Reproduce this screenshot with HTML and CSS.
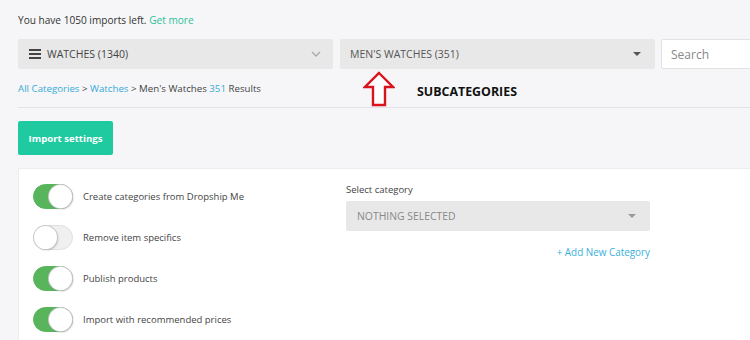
FILE: index.html
```html
<!DOCTYPE html>
<html>
<head>
<meta charset="utf-8">
<link rel="stylesheet" href="styles.css">
</head>
<body>
<div class="page">
  <div class="notice">You have 1050 imports left. <a class="teal">Get more</a></div>
  <div class="filters">
    <div class="dd dd-main">
      <svg class="burger" width="12" height="10" viewBox="0 0 12 10"><rect x="0" y="0" width="12" height="2" fill="#444"/><rect x="0" y="4" width="12" height="2" fill="#444"/><rect x="0" y="8" width="12" height="2" fill="#444"/></svg>
      <span class="dd-text">WATCHES (1340)</span>
      <svg class="chev" width="10" height="6" viewBox="0 0 10 6"><path d="M1 1 L5 5 L9 1" fill="none" stroke="#aaa" stroke-width="1.3"/></svg>
    </div>
    <div class="dd dd-sub">
      <span class="dd-text">MEN'S WATCHES (351)</span>
      <span class="caret"></span>
    </div>
    <div class="search">Search</div>
  </div>
  <div class="crumbrow">
    <div class="crumbs"><a class="blue">All Categories</a> &gt; <a class="blue">Watches</a> &gt; Men's Watches <span class="blue">351</span> Results</div>
    <svg class="arrow" width="32" height="36" viewBox="0 0 32 36"><path d="M16 2 L30 16 L22 16 L22 34 L10 34 L10 16 L2 16 Z" fill="#fff" stroke="#d9141c" stroke-width="2.4" stroke-linejoin="miter"/></svg>
    <div class="annot">SUBCATEGORIES</div>
  </div>
  <div class="divider"></div>
  <button class="btn">Import settings</button>
  <div class="card">
    <div class="col-left">
      <div class="row"><span class="toggle on"></span><span>Create categories from Dropship Me</span></div>
      <div class="row"><span class="toggle"></span><span>Remove item specifics</span></div>
      <div class="row"><span class="toggle on"></span><span>Publish products</span></div>
      <div class="row"><span class="toggle on"></span><span>Import with recommended prices</span></div>
    </div>
    <div class="col-right">
      <div class="label">Select category</div>
      <div class="select"><span>NOTHING SELECTED</span><span class="caret light"></span></div>
      <div class="addlink">+ Add New Category</div>
    </div>
  </div>
</div>
</body>
</html>
```
FILE: styles.css
```css
* { box-sizing: border-box; }
html, body { margin: 0; padding: 0; }
body {
  background: #f6f6f8;
  font-family: "Open Sans", "Noto Sans", sans-serif;
  font-size: 10.5px;
  color: #333;
  overflow: hidden;
  width: 750px;
  height: 340px;
}
.page { padding: 12px 0 0 18px; width: 800px; }
.notice { line-height: 16px; color: #333; font-size: 10.1px; }
.teal { color: #2ebf98; }
.blue { color: #38aad6; }
.filters { display: flex; margin-top: 11px; height: 30px; }
.dd {
  width: 315px; height: 30px; background: #e8e8e8;
  display: flex; align-items: center; padding: 0 10px; border-radius: 2px;
  color: #555; font-size: 10.5px;
}
.dd-main { padding-left: 11px; margin-right: 7px; }
.dd-main .dd-text { margin-left: 6px; flex: 1; color: #444; }
.dd-sub { margin-right: 6px; }
.dd-sub .dd-text { flex: 1; color: #555; }
.chev { margin-right: 2px; }
.caret {
  width: 0; height: 0; border-left: 4px solid transparent; border-right: 4px solid transparent;
  border-top: 4px solid #555; margin-right: 4px;
}
.caret.light { border-top-color: #999; }
.search {
  width: 120px; height: 30px; background: #fff; border: 1px solid #e2e2e2; border-radius: 2px;
  display: flex; align-items: center; padding-left: 9px; color: #888; font-size: 12px;
}
.crumbs { color: #444; font-size: 9.7px; }
.crumbrow { position: relative; height: 38px; display: flex; align-items: center; }
.arrow { position: absolute; left: 345px; top: 2px; }
.annot { position: absolute; left: 399px; top: 14px; font-weight: 700; font-size: 12.4px; color: #111; }
.divider { height: 1px; background: #e3e3e5; width: 750px; }
.btn {
  display: block; margin-top: 13px; width: 95px; height: 34px; background: #1fcaa0; color: #fff;
  border: 0; border-radius: 2px; font-family: inherit; font-weight: 700; font-size: 9.6px; padding: 0;
}
.card {
  margin-top: 13px; background: #fff; height: 200px; width: 760px;
  display: flex; padding: 15px 14px 0 14px; border: 1px solid #ededee;
  font-size: 9.5px;
}
.col-left { width: 313px; display: flex; flex-direction: column; gap: 16px; }
.row { display: flex; align-items: center; gap: 10px; height: 25px; color: #444; }
.toggle {
  position: relative; width: 40px; height: 25px; border-radius: 13px; background: #f0f0f0;
  border: 1px solid #e0e0e0; flex: none;
}
.toggle::after {
  content: ""; position: absolute; top: 0; left: 0; width: 23px; height: 23px; border-radius: 50%;
  background: #fff; box-shadow: 0 0 0 1px #c8c8c8, 1px 1px 2px rgba(0,0,0,0.25);
}
.toggle.on { background: #58b55c; border-color: #58b55c; }
.toggle.on::after { left: 15px; }
.col-right { width: 304px; padding-top: 0; }
.label { color: #444; line-height: 12px; }
.select {
  margin-top: 5px; height: 30px; background: #e8e8e8; display: flex; align-items: center;
  justify-content: space-between; padding: 0 10px 0 11px; color: #888; font-size: 10.4px; border-radius: 2px;
}
.addlink { text-align: right; margin-top: 14px; color: #3aafd8; font-size: 9.9px; }
```
